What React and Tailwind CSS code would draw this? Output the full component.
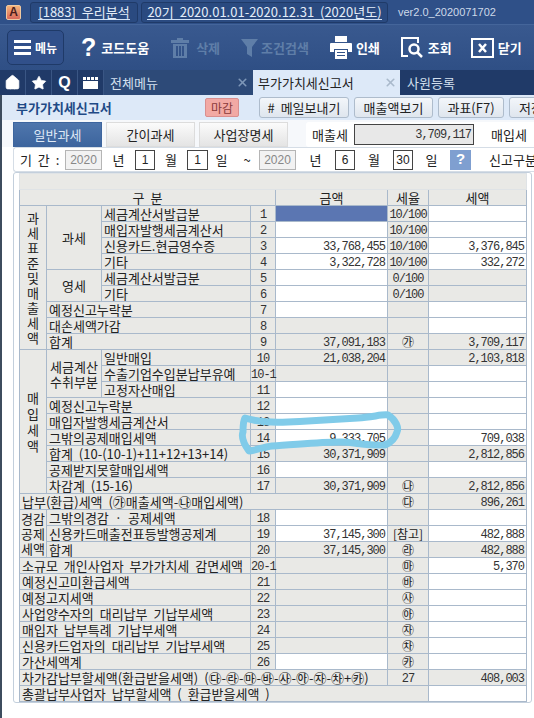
import { Home, Star, X } from 'lucide-react';

const GREY = 'bg-[#e9e9e6]';
const WHITE = 'bg-white';
const BLUE = 'bg-[#5b76b2]';
const CJK = '"Noto Sans CJK KR", "Liberation Sans", sans-serif';
const line = 'border border-[#a9b9cb]';

function Num({ children, className = '' }) {
  return <span className={`font-['Liberation_Mono'] text-[12px] tracking-[-1px] text-[#333] ${className}`}>{children}</span>;
}

function Label({ children, colSpan, rowSpan, center }) {
  return (
    <td colSpan={colSpan} rowSpan={rowSpan} className={`${line} ${GREY} px-[2px] overflow-hidden whitespace-nowrap ${center ? 'text-center' : ''}`}>
      {children}
    </td>
  );
}

function Values({ no, amount, rate, tax, amtBg = WHITE, taxBg = WHITE }) {
  return (
    <>
      {no !== undefined && <td className={`${line} ${GREY} text-center`}><Num>{no}</Num></td>}
      {amount !== undefined && (
        <td className={`${line} ${amtBg} text-right pr-[2px]`}>
          {amount && <Num>{amount}</Num>}
        </td>
      )}
      <td className={`${line} ${GREY} text-center overflow-hidden whitespace-nowrap`}>
        {rate && (/^[0-9/]+$/.test(rate) ? <Num>{rate}</Num> : <span className="text-[12px]">{rate}</span>)}
      </td>
      <td className={`${line} ${taxBg} text-right pr-[2px]`}>
        {tax && <Num>{tax}</Num>}
      </td>
    </>
  );
}

function VerticalLabel({ chars, rowSpan, leading }) {
  return (
    <td rowSpan={rowSpan} className={`${line} ${GREY} text-center ${leading}`}>
      {chars.split('').map((c, i) => <div key={i}>{c}</div>)}
    </td>
  );
}

function Row({ children }) {
  return <tr className="h-4">{children}</tr>;
}

function TaxTable() {
  return (
    <table className="w-[507px] table-fixed border-collapse text-[13px] leading-none text-[#222]">
      <colgroup>
        <col className="w-[27px]" />
        <col className="w-[55px]" />
        <col className="w-[149px]" />
        <col className="w-[25px]" />
        <col className="w-[112px]" />
        <col className="w-[41px]" />
        <col className="w-[98px]" />
      </colgroup>
      <tbody>
        <tr className="h-4"><td colSpan={7} className={`${GREY} border border-[#dfe3e6]`}></td></tr>
        <Row>
          <Label colSpan={4} center>구 분</Label>
          <Label center>금액</Label>
          <Label center>세율</Label>
          <Label center>세액</Label>
        </Row>
        <Row>
          <VerticalLabel chars="과세표준및매출세액" rowSpan={9} leading="leading-[15px]" />
          <Label rowSpan={4} center>과세</Label>
          <Label>세금계산서발급분</Label>
          <Values no="1" amount="" rate="10/100" amtBg={BLUE} />
        </Row>
        <Row><Label>매입자발행세금계산서</Label><Values no="2" amount="" rate="10/100" /></Row>
        <Row><Label>신용카드.현금영수증</Label><Values no="3" amount="33,768,455" rate="10/100" tax="3,376,845" /></Row>
        <Row><Label>기타</Label><Values no="4" amount="3,322,728" rate="10/100" tax="332,272" /></Row>
        <Row>
          <Label rowSpan={2} center>영세</Label>
          <Label>세금계산서발급분</Label>
          <Values no="5" amount="" rate="0/100" taxBg={GREY} />
        </Row>
        <Row><Label>기타</Label><Values no="6" amount="" rate="0/100" taxBg={GREY} /></Row>
        <Row><Label colSpan={2}>예정신고누락분</Label><Values no="7" amount="" /></Row>
        <Row><Label colSpan={2}>대손세액가감</Label><Values no="8" amount="" amtBg={GREY} /></Row>
        <Row><Label colSpan={2}>합계</Label><Values no="9" amount="37,091,183" rate="㉮" tax="3,709,117" amtBg={GREY} taxBg={GREY} /></Row>
        <Row>
          <VerticalLabel chars="매입세액" rowSpan={9} leading="leading-[16px]" />
          <td rowSpan={3} className={`${line} ${GREY} text-center leading-[15px]`}>세금계산<br />수취부분</td>
          <Label>일반매입</Label>
          <Values no="10" amount="21,038,204" tax="2,103,818" amtBg={GREY} taxBg={GREY} />
        </Row>
        <Row><Label>수출기업수입분납부유예</Label><Values no="10-1" amount="" amtBg={GREY} /></Row>
        <Row><Label>고정자산매입</Label><Values no="11" amount="" /></Row>
        <Row><Label colSpan={2}>예정신고누락분</Label><Values no="12" amount="" /></Row>
        <Row><Label colSpan={2}>매입자발행세금계산서</Label><Values no="13" amount="" /></Row>
        <Row><Label colSpan={2}>그밖의공제매입세액</Label><Values no="14" amount="9,333,705" tax="709,038" /></Row>
        <Row><Label colSpan={2}>합계 (10-(10-1)+11+12+13+14)</Label><Values no="15" amount="30,371,909" tax="2,812,856" amtBg={GREY} taxBg={GREY} /></Row>
        <Row><Label colSpan={2}>공제받지못할매입세액</Label><Values no="16" amount="" /></Row>
        <Row><Label colSpan={2}>차감계 (15-16)</Label><Values no="17" amount="30,371,909" rate="㉯" tax="2,812,856" amtBg={GREY} taxBg={GREY} /></Row>
        <Row><Label colSpan={5}>납부(환급)세액 (㉮매출세액-㉯매입세액)</Label><Values rate="㉰" tax="896,261" taxBg={GREY} /></Row>
        <Row>
          <td rowSpan={3} className={`${line} ${GREY} text-center leading-[15px] overflow-hidden`}>경감<br />공제<br />세액</td>
          <Label colSpan={2}>그밖의경감 · 공제세액</Label>
          <Values no="18" amount="" />
        </Row>
        <Row><Label colSpan={2}>신용카드매출전표등발행공제계</Label><Values no="19" amount="37,145,300" rate="[참고]" tax="482,888" /></Row>
        <Row><Label colSpan={2}>합계</Label><Values no="20" amount="37,145,300" rate="㉱" tax="482,888" amtBg={GREY} taxBg={GREY} /></Row>
        <Row><Label colSpan={3}>소규모 개인사업자 부가가치세 감면세액</Label><Values no="20-1" amount="" rate="㉲" tax="5,370" amtBg={GREY} /></Row>
        <Row><Label colSpan={3}>예정신고미환급세액</Label><Values no="21" amount="" rate="㉳" amtBg={GREY} /></Row>
        <Row><Label colSpan={3}>예정고지세액</Label><Values no="22" amount="" rate="㉴" amtBg={GREY} /></Row>
        <Row><Label colSpan={3}>사업양수자의 대리납부 기납부세액</Label><Values no="23" amount="" rate="㉵" amtBg={GREY} /></Row>
        <Row><Label colSpan={3}>매입자 납부특례 기납부세액</Label><Values no="24" amount="" rate="㉶" amtBg={GREY} /></Row>
        <Row><Label colSpan={3}>신용카드업자의 대리납부 기납부세액</Label><Values no="25" amount="" rate="㉷" amtBg={GREY} /></Row>
        <Row><Label colSpan={3}>가산세액계</Label><Values no="26" amount="" rate="㉸" /></Row>
        <Row><Label colSpan={5}>차가감납부할세액(환급받을세액) (㉰-㉱-㉲-㉳-㉴-㉵-㉶-㉷+㉸)</Label><Values rate="27" tax="408,003" taxBg={GREY} /></Row>
        <Row>
          <Label colSpan={6}>총괄납부사업자 납부할세액 ( 환급받을세액 )</Label>
          <td className={`${line} ${WHITE}`}></td>
        </Row>
      </tbody>
    </table>
  );
}

function ToolItem({ icon, label, dim, className = '' }) {
  return (
    <div className={`flex items-center ${className}`}>
      {icon}
      <span className={`text-[13px] font-bold ${dim ? 'text-[#5f7ea8]' : 'text-white'}`}>{label}</span>
    </div>
  );
}

function Toolbar() {
  return (
    <div className="flex h-[46px] items-center border-t border-[#44659a] bg-gradient-to-b from-[#39598f] to-[#2f4f85] pl-[7px]">
      <div className="flex h-[35px] w-[57px] items-center justify-center gap-[4px] rounded-[5px] border border-[#1f3a68] bg-[#31508a]">
        <svg width="17" height="15" viewBox="0 0 17 15" fill="#fff"><rect y="0" width="17" height="3" /><rect y="6" width="17" height="3" /><rect y="12" width="17" height="3" /></svg>
        <span className="text-[12px] font-bold text-white">메뉴</span>
      </div>
      <ToolItem
        className="ml-[17px] gap-[5px]"
        icon={<span className="text-[25px] leading-none font-bold text-white font-['Liberation_Sans']">?</span>}
        label="코드도움"
      />
      <ToolItem
        dim
        className="ml-[22px] gap-[7px]"
        label="삭제"
        icon={
          <svg width="18" height="20" viewBox="0 0 18 20" fill="#5f7ea8">
            <rect x="6" y="0" width="6" height="2" />
            <rect x="0" y="2" width="18" height="3" />
            <path d="M2 6h14v14H2zM5 8v10h2V8zM8 8v10h2V8zM11 8v10h2V8z" fillRule="evenodd" />
          </svg>
        }
      />
      <ToolItem
        dim
        className="ml-[21px] gap-[3px]"
        label="조건검색"
        icon={
          <svg width="17" height="20" viewBox="0 0 17 20" fill="#5f7ea8"><path d="M0 1h17l-6 8v10l-5-3V9z" /></svg>
        }
      />
      <ToolItem
        className="ml-[21px] gap-[4px]"
        label="인쇄"
        icon={
          <svg width="22" height="23" viewBox="0 0 22 23" fill="#fff">
            <rect x="5" y="0" width="12" height="6" />
            <path d="M1 7h20a1 1 0 0 1 1 1v8h-4v-3H4v3H0V8a1 1 0 0 1 1-1z" />
            <path d="M5 14h12v9H5zM7 16v1h8v-1zM7 19v1h8v-1z" fillRule="evenodd" />
          </svg>
        }
      />
      <ToolItem
        className="ml-[21px] gap-[5px]"
        label="조회"
        icon={
          <svg width="22" height="21" viewBox="0 0 22 21" fill="none" stroke="#fff">
            <path d="M7 19H1V1h16v5" strokeWidth="2" />
            <circle cx="13" cy="12" r="4.5" strokeWidth="2.5" />
            <path d="M16 15l5 5" strokeWidth="2.5" />
          </svg>
        }
      />
      <ToolItem
        className="ml-[19px] gap-[4px]"
        label="닫기"
        icon={
          <svg width="23" height="20" viewBox="0 0 23 20" fill="none" stroke="#fff">
            <rect x="1" y="1" width="21" height="18" strokeWidth="2" />
            <path d="M8 6l7 8M15 6l-7 8" strokeWidth="2.5" />
          </svg>
        }
      />
    </div>
  );
}

function SubButton({ children, className = '' }) {
  return (
    <div className={`flex h-[21px] shrink-0 items-center rounded-[3px] border border-[#aebccc] bg-gradient-to-b from-[#f3f6fa] to-[#dfe6ee] text-[13px] text-[#222] ${className}`}>
      {children}
    </div>
  );
}

function TabButton({ children, active }) {
  return (
    <div className={`flex h-[25px] w-[89px] items-center justify-center border text-[13px] ${active ? 'border-[#3d659e] bg-gradient-to-b from-[#4f76ac] to-[#3d659e] text-[#dfe9f6]' : 'border-[#dcdcdc] bg-gradient-to-b from-[#fbfbfb] to-[#e4e4e4] text-[#222]'}`}>
      {children}
    </div>
  );
}

function DateBox({ children, muted, w = 'w-[20px]' }) {
  return (
    <div className={`flex h-[20px] shrink-0 ${w} items-center justify-center border font-['Liberation_Sans'] text-[12px] ${muted ? 'border-[#b5b5b5] bg-[#f2f2f2] text-[#888]' : 'border-[#444] bg-white text-[#222]'}`}>
      {children}
    </div>
  );
}

function DateText({ children, w }) {
  return <span className={`${w} shrink-0 text-center`}>{children}</span>;
}

export default function App() {
  return (
    <div className="h-[718px] w-[534px] overflow-hidden whitespace-nowrap bg-white [word-spacing:3px]" style={{ fontFamily: CJK }}>
      {/* title bar */}
      <div className="flex h-[24px] items-center bg-[#2f5088] pl-[6px]">
        <div className="flex h-[15px] w-[15px] items-center justify-center rounded-[2px] border border-[#f0c9a0] bg-gradient-to-b from-[#f3b27a] to-[#d9685a] text-[12px] font-bold text-[#4a1c1c] font-['Liberation_Sans']">A</div>
        <div className="ml-[9px] flex h-[21px] w-[108px] items-center justify-center rounded-[3px] border border-[#1f3a68] bg-[#2a4a80] text-[13px] text-[#e4edf8]">
          <span className="border-b border-[#cfe0f5] leading-[15px]">[1883] 우리분석</span>
        </div>
        <div className="ml-[3px] flex h-[21px] w-[247px] items-center justify-center rounded-[3px] border border-[#1f3a68] bg-[#2a4a80] text-[13px] text-[#e4edf8]">
          <span className="border-b border-[#cfe0f5] leading-[15px]">20기 2020.01.01-2020.12.31 (2020년도)</span>
        </div>
        <span className="ml-[10px] font-['Liberation_Sans'] text-[11px] text-[#cdd9e8]">ver2.0_2020071702</span>
      </div>

      <Toolbar />

      {/* tab strip */}
      <div className="flex h-[25px] items-center bg-[#203a68] text-[13px]">
        <div className="flex h-full w-[104px] items-center text-white">
          <div className="flex h-full w-[26px] items-center justify-center border-r border-[#3a5684]"><Home size={17} fill="#fff" strokeWidth={1} /></div>
          <div className="flex h-full w-[26px] items-center justify-center border-r border-[#3a5684]"><Star size={16} fill="#fff" strokeWidth={1} /></div>
          <div className="flex h-full w-[26px] items-center justify-center border-r border-[#3a5684] text-[16px] font-bold leading-none font-['Liberation_Sans']">Q</div>
          <div className="flex h-full w-[26px] items-center justify-center border-r border-[#3a5684]">
            <svg width="15" height="13" viewBox="0 0 15 13" fill="#fff"><path d="M0 1h3v3H0zM4 1h3v3H4zM8 1h3v3H8zM12 1h3v3h-3zM0 5h15v8H0z" /></svg>
          </div>
        </div>
        <div className="flex h-full w-[149px] items-center justify-between bg-[#2d4a78] pl-[6px] pr-[4px] text-[#d4e0ef]">
          전체메뉴 <X size={13} strokeWidth={3} className="text-[#7e97b8]" />
        </div>
        <div className="flex h-full w-[147px] items-center justify-between bg-[#dde9f8] pl-[5px] pr-[3px] text-[#222]">
          부가가치세신고서 <X size={13} strokeWidth={3} className="text-[#a9b9cb]" />
        </div>
        <div className="flex h-full flex-1 items-center pl-[7px] text-[#d4e0ef]">사원등록</div>
      </div>

      {/* left edge strip + page body */}
      <div className="h-[623px] border-l-2 border-[#3d4c5e]">
        <div className="flex h-[25px] items-center overflow-hidden bg-[#dde9f8] pl-[14px]">
          <span className="w-[189px] shrink-0 text-[13px] font-bold text-[#1f4a86]">부가가치세신고서</span>
          <div className="flex h-[19px] w-[34px] shrink-0 items-center justify-center rounded-[2px] border border-[#d98f8f] bg-[#f2a9a4] text-[12px] text-[#8a3a3a]">마감</div>
          <SubButton className="ml-[20px] w-[90px] justify-center"># 메일보내기</SubButton>
          <SubButton className="ml-[5px] w-[79px] justify-center">매출액보기</SubButton>
          <SubButton className="ml-[5px] w-[66px] justify-center">과표(F7)</SubButton>
          <SubButton className="ml-[5px] w-[60px] pl-[9px]">저장</SubButton>
        </div>

        <div className="flex h-[27px] items-center bg-[#f6f8fb] pl-[11px] pt-[2px]">
          <div className="flex gap-[4px]">
            <TabButton active>일반과세</TabButton>
            <TabButton>간이과세</TabButton>
            <TabButton>사업장명세</TabButton>
          </div>
          <div className="ml-[18px] flex h-full flex-1 items-center rounded-l-[3px] bg-white pl-[6px] text-[13px] text-[#222]">
            <span className="w-[42px] shrink-0">매출세</span>
            <div className="flex h-[21px] w-[120px] shrink-0 items-center justify-end border border-[#444] bg-[#e8e8e8] pr-[2px]"><Num>3,709,117</Num></div>
            <span className="ml-[17px]">매입세</span>
          </div>
        </div>

        <div className="ml-[11px] flex h-[25px] items-center rounded-l-[3px] border border-r-0 border-[#d5dde6] bg-white pl-[6px] text-[13px] text-[#222]">
          <span className="w-[45px] shrink-0">기 간 :</span>
          <DateBox muted w="w-[37px]">2020</DateBox>
          <DateText w="w-[33px]">년</DateText>
          <DateBox>1</DateBox>
          <DateText w="w-[32px]">월</DateText>
          <DateBox w="w-[21px]">1</DateBox>
          <DateText w="w-[27px]">일</DateText>
          <DateText w="w-[24px]">~</DateText>
          <DateBox muted w="w-[37px]">2020</DateBox>
          <DateText w="w-[39px]">년</DateText>
          <DateBox>6</DateBox>
          <DateText w="w-[38px]">월</DateText>
          <DateBox>30</DateBox>
          <DateText w="w-[37px]">일</DateText>
          <div className="flex h-[20px] w-[21px] shrink-0 items-center justify-center bg-[#7f9fd0] text-[15px] font-bold text-white font-['Liberation_Sans']">?</div>
          <span className="ml-[18px] shrink-0">신고구분</span>
        </div>

        <div className="relative ml-[11px] w-[519px] rounded-[3px] border border-[#c3cfdc] bg-white px-[5px]">
          <TaxTable />
          {/* highlighter scribble */}
          <svg className="absolute left-[224px] top-[237px]" width="165" height="48" viewBox="0 0 165 48" fill="none">
            <path
              d="M7 8 C20 12 34 13 50 12 C70 11 85 10 120 8 C135 7 145 4 150 5 C158 10 161 18 159 22 C157 29 152 33 147 35 C130 36 115 32 102 32 C80 32 55 35 34 36 C25 37 16 41 11 41 C6 34 3 27 5 22 C5 15 5 11 7 8 Z"
              stroke="#80cbe9"
              strokeWidth="7"
              strokeLinejoin="round"
            />
          </svg>
        </div>
      </div>
    </div>
  );
}
